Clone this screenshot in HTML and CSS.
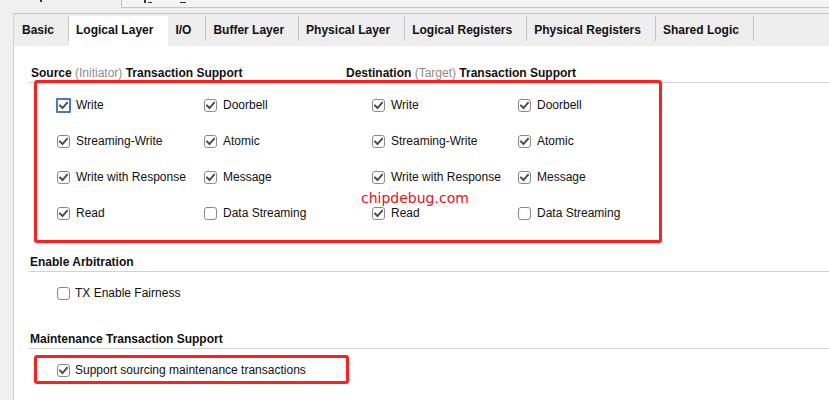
FILE: index.html
```html
<!DOCTYPE html>
<html>
<head>
<meta charset="utf-8">
<link rel="stylesheet" href="styles.css">
</head>
<body>
<div class="topstrip">
  <div class="ts-left"><span class="frag f1"></span></div>
  <div class="ts-right"><span class="frag f2"></span><span class="frag f2b"></span><span class="frag f3"></span></div>
</div>
<div class="panel">
  <div class="tabs">
    <div class="tab">Basic</div>
    <div class="tab active">Logical Layer</div>
    <div class="tab">I/O</div>
    <div class="tab">Buffer Layer</div>
    <div class="tab">Physical Layer</div>
    <div class="tab">Logical Registers</div>
    <div class="tab">Physical Registers</div>
    <div class="tab">Shared Logic</div>
  </div>
  <div class="content">
    <div class="head dual">
      <div class="head-l">Source <span class="muted">(Initiator)</span> Transaction Support</div>
      <div class="head-r">Destination <span class="muted">(Target)</span> Transaction Support</div>
    </div>
    <div class="grid">
      <label class="opt"><span class="cb focus"><svg viewBox="0 0 11 11"><path d="M2 5.5 L4.5 8 L9 2.8"/></svg></span>Write</label>
      <label class="opt"><span class="cb"><svg viewBox="0 0 11 11"><path d="M2 5.5 L4.5 8 L9 2.8"/></svg></span>Doorbell</label>
      <label class="opt"><span class="cb"><svg viewBox="0 0 11 11"><path d="M2 5.5 L4.5 8 L9 2.8"/></svg></span>Write</label>
      <label class="opt"><span class="cb"><svg viewBox="0 0 11 11"><path d="M2 5.5 L4.5 8 L9 2.8"/></svg></span>Doorbell</label>

      <label class="opt"><span class="cb"><svg viewBox="0 0 11 11"><path d="M2 5.5 L4.5 8 L9 2.8"/></svg></span>Streaming-Write</label>
      <label class="opt"><span class="cb"><svg viewBox="0 0 11 11"><path d="M2 5.5 L4.5 8 L9 2.8"/></svg></span>Atomic</label>
      <label class="opt"><span class="cb"><svg viewBox="0 0 11 11"><path d="M2 5.5 L4.5 8 L9 2.8"/></svg></span>Streaming-Write</label>
      <label class="opt"><span class="cb"><svg viewBox="0 0 11 11"><path d="M2 5.5 L4.5 8 L9 2.8"/></svg></span>Atomic</label>

      <label class="opt"><span class="cb"><svg viewBox="0 0 11 11"><path d="M2 5.5 L4.5 8 L9 2.8"/></svg></span>Write with Response</label>
      <label class="opt"><span class="cb"><svg viewBox="0 0 11 11"><path d="M2 5.5 L4.5 8 L9 2.8"/></svg></span>Message</label>
      <label class="opt"><span class="cb"><svg viewBox="0 0 11 11"><path d="M2 5.5 L4.5 8 L9 2.8"/></svg></span>Write with Response</label>
      <label class="opt"><span class="cb"><svg viewBox="0 0 11 11"><path d="M2 5.5 L4.5 8 L9 2.8"/></svg></span>Message</label>

      <label class="opt"><span class="cb"><svg viewBox="0 0 11 11"><path d="M2 5.5 L4.5 8 L9 2.8"/></svg></span>Read</label>
      <label class="opt"><span class="cb"></span>Data Streaming</label>
      <label class="opt"><span class="cb"><svg viewBox="0 0 11 11"><path d="M2 5.5 L4.5 8 L9 2.8"/></svg></span>Read</label>
      <label class="opt"><span class="cb"></span>Data Streaming</label>
    </div>

    <div class="head sec2">Enable Arbitration</div>
    <label class="single"><span class="cb"></span>TX Enable Fairness</label>

    <div class="head sec3">Maintenance Transaction Support</div>
    <label class="single"><span class="cb"><svg viewBox="0 0 11 11"><path d="M2 5.5 L4.5 8 L9 2.8"/></svg></span>Support sourcing maintenance transactions</label>
  </div>
</div>
<div class="redbox box1"></div>
<div class="redbox box2"></div>
<div class="watermark">chipdebug.com</div>
</body>
</html>
```

FILE: styles.css
```css
html, body {
  margin: 0;
  padding: 0;
}
body {
  width: 829px;
  height: 400px;
  overflow: hidden;
  background: #f0f0f0;
  font-family: "Liberation Sans", Arial, sans-serif;
  font-size: 12px;
  color: #111;
  position: relative;
}

/* top strip (cut-off toolbar) */
.topstrip {
  display: flex;
  height: 13px;
}
.ts-left {
  width: 121px;
  height: 7px;
  position: relative;
}
.ts-right {
  flex: 1;
  height: 7px;
  background: #f4f4f4;
  border-left: 1px solid #c6c6c6;
  border-bottom: 1px solid #c6c6c6;
  display: flex;
  align-items: flex-start;
}
.frag {
  display: block;
  background: #333;
}
.f1 {
  margin-left: 40px;
  width: 2px;
  height: 2px;
}
.f2 {
  margin-left: 22px;
  width: 2px;
  height: 3px;
}
.f2b {
  margin-left: 2px;
  margin-top: 2px;
  width: 4px;
  height: 1px;
}
.f3 {
  margin-left: 28px;
  margin-top: 2px;
  width: 6px;
  height: 1px;
}

/* panel */
.panel {
  margin-left: 13px;
  border-left: 1px solid #d4d4d4;
  border-top: 1px solid #c6c6c6;
  height: 386px;
  background: #fff;
}
.tabs {
  display: flex;
  align-items: flex-start;
  height: 32px;
  box-sizing: border-box;
  padding-top: 2px;
  background: #eeeeee;
}
.tab {
  height: 25px;
  line-height: 29px;
  padding: 0 14px 0 7px;
  border-right: 1px solid #c4c4c4;
  font-weight: bold;
  white-space: nowrap;
}
.tab:first-child {
  padding-left: 8px;
}
.tab.active {
  height: 30px;
  background: #fff;
  border-right-color: transparent;
}

.content {
  padding-left: 15px;
}
.head {
  height: 18px;
  line-height: 18px;
  border-bottom: 1px solid #d2d2d2;
  font-weight: bold;
  padding-left: 1px;
  white-space: nowrap;
}
.muted {
  color: #8c8c8c;
  font-weight: normal;
}
.dual {
  display: flex;
  margin-top: 18px;
}
.head-l {
  width: 315px;
  padding-left: 1px;
}
.sec2 {
  margin-top: 22px;
}
.sec3 {
  margin-top: 19px;
}

.grid {
  margin-top: 4px;
  padding-left: 28px;
  display: grid;
  grid-template-columns: 147px 168px 146px auto;
  grid-auto-rows: 36px;
}
.opt, .single {
  display: flex;
  align-items: center;
  gap: 6px;
  white-space: nowrap;
}
.single {
  height: 36px;
  margin-top: 3px;
  padding-left: 28px;
  gap: 5px;
}

.cb {
  flex: none;
  width: 13px;
  height: 13px;
  box-sizing: border-box;
  border: 1px solid #8a8a8a;
  border-radius: 3px;
  background: #fff;
  display: flex;
  align-items: center;
  justify-content: center;
}
.cb svg {
  width: 11px;
  height: 11px;
  display: block;
}
.cb path {
  fill: none;
  stroke: #4a4a4a;
  stroke-width: 1.9;
  stroke-linecap: square;
}
.cb.focus {
  width: 15px;
  height: 15px;
  margin: -1px;
  border: 2px solid #4d78c9;
  border-radius: 1px;
}

/* annotation overlays */
.redbox {
  position: absolute;
  box-sizing: border-box;
  border: 3px solid #ff1f1f;
  border-radius: 3px;
}
.box1 {
  left: 34px;
  top: 80px;
  width: 628px;
  height: 163px;
}
.box2 {
  left: 34px;
  top: 355px;
  width: 315px;
  height: 29px;
}
.watermark {
  position: absolute;
  left: 361px;
  top: 189px;
  font-family: "DejaVu Sans", sans-serif;
  font-size: 14px;
  line-height: 18px;
  color: #e8121c;
}
```
